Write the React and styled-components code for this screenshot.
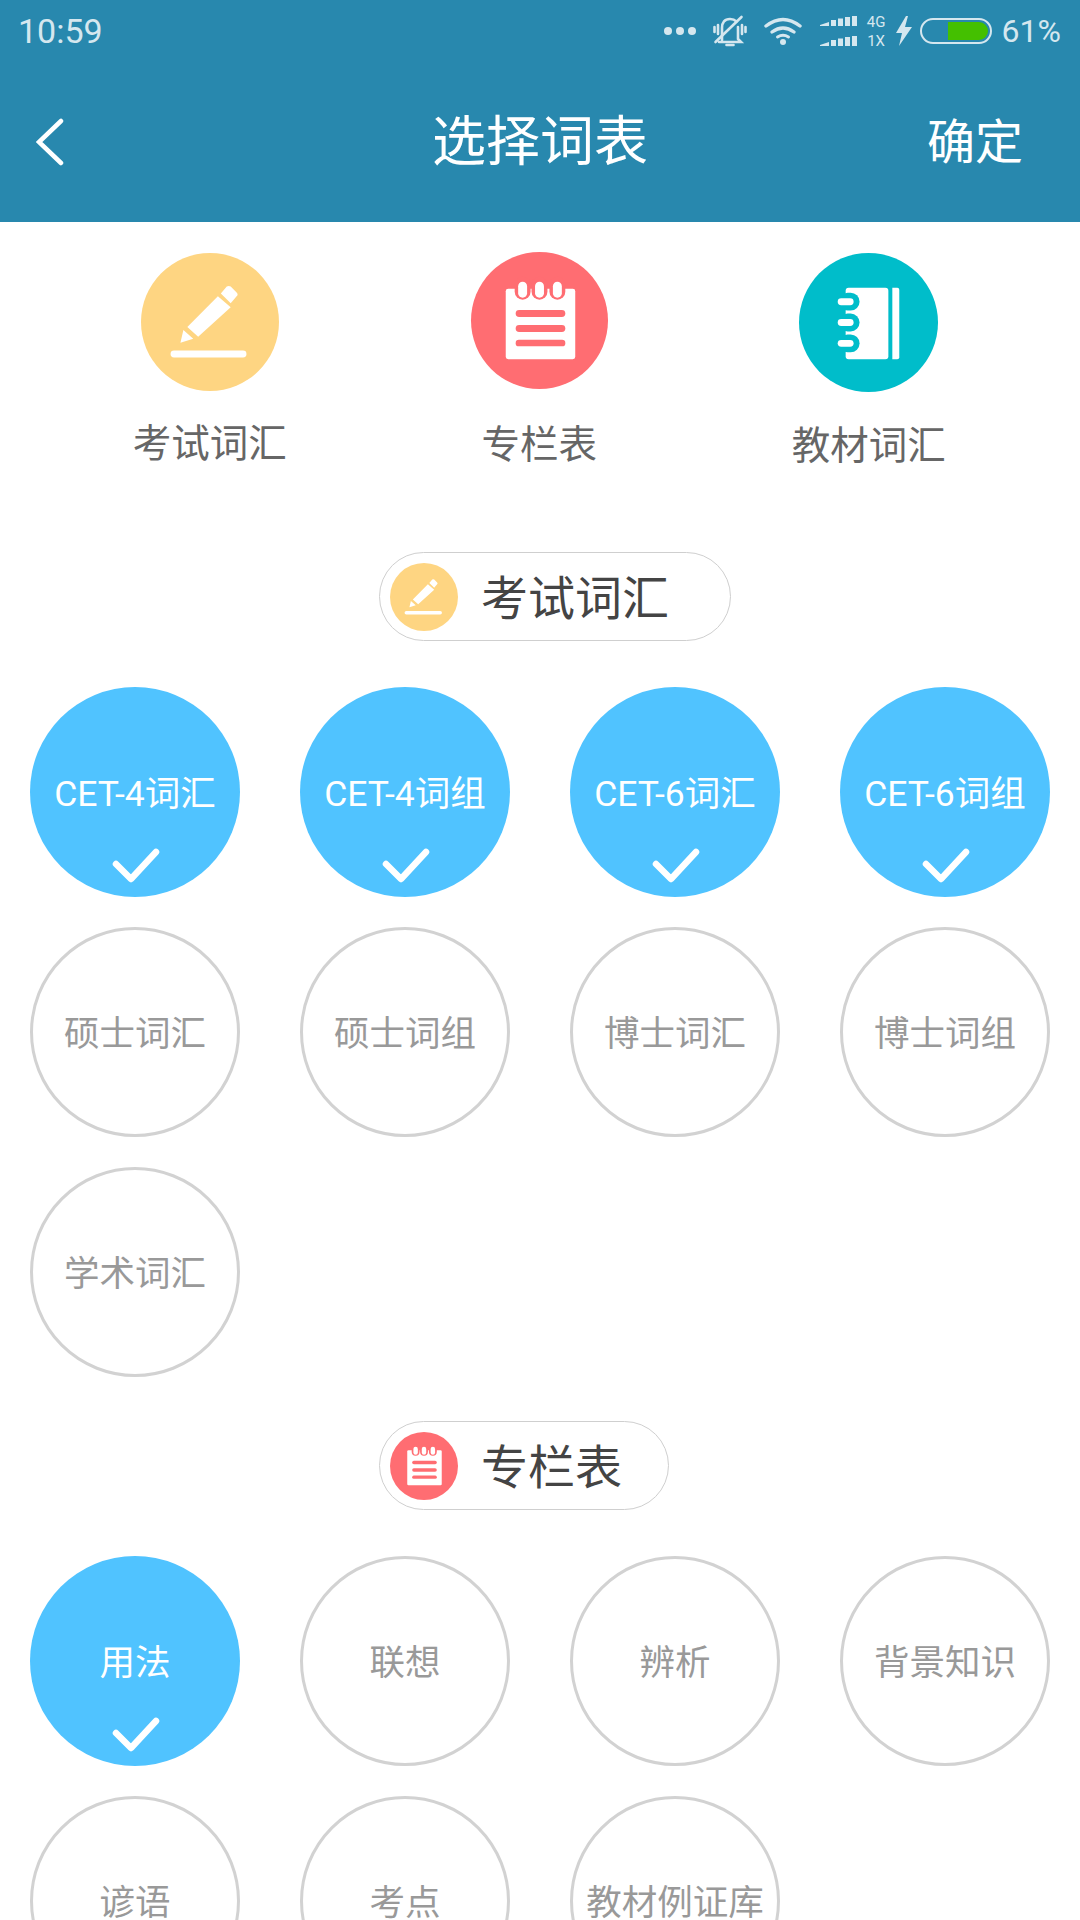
import React from "react";
import styled, { createGlobalStyle } from "styled-components";

const Global = createGlobalStyle`
  html, body { margin: 0; padding: 0; background: #fff; }
  body { font-family: Roboto, "Noto Sans CJK SC", sans-serif; }
  * { box-sizing: border-box; }
`;

const Page = styled.div`
  width: 1080px;
  height: 1920px;
  overflow: hidden;
  background: #fff;
`;
const Header = styled.header`
  height: 222px;
  background: #2888ae;
  display: flex;
  flex-direction: column;
`;
const StatusBar = styled.div`
  height: 62px;
  padding: 0 19px 0 18px;
  display: flex;
  align-items: center;
  justify-content: space-between;
  color: #d5e7ef;
`;
const Clock = styled.span`
  font-size: 34px;
  font-family: Roboto, sans-serif;
  font-weight: 400;
`;
const StatusIcons = styled.div`
  display: flex;
  align-items: center;
`;
const StatusGlyph = styled.svg`
  display: block;
  flex: none;
  margin-right: ${(p) => p.$gap}px;
`;
const NetLabels = styled.div`
  width: 21px;
  margin-right: 9px;
  display: flex;
  flex-direction: column;
  align-items: center;
  gap: 3px;
  font-size: 15px;
  line-height: 16px;
  font-family: Roboto, sans-serif;
`;
const Battery = styled.div`
  width: 72px;
  height: 26px;
  margin-right: 10px;
  border: 2px solid #d5e7ef;
  border-radius: 13px;
  padding: 2px;
  display: flex;
  justify-content: flex-end;
`;
const BatteryFill = styled.div`
  width: 40px;
  background: #44c000;
  border-radius: 0 9px 9px 0;
`;
const Percent = styled.span`
  font-size: 32px;
  font-weight: 400;
  font-family: Roboto, sans-serif;
`;
const NavBar = styled.div`
  flex: 1;
  display: grid;
  grid-template-columns: 1fr auto 1fr;
  align-items: center;
  color: #fff;
`;
const BackButton = styled.div`
  padding-left: 36px;
  display: flex;
`;
const Title = styled.h1`
  margin: 2px 0 0;
  font-size: 54px;
  font-weight: 400;
  line-height: 1;
`;
const Confirm = styled.div`
  justify-self: end;
  margin-top: 2px;
  padding-right: 57px;
  font-size: 48px;
  line-height: 1;
`;
const Tabs = styled.nav`
  height: 330px;
  padding: 30px 0 0 45px;
  display: grid;
  grid-template-columns: repeat(3, 329.5px);
  align-items: start;
`;
const Tab = styled.div`
  margin-top: ${(p) => p.$top}px;
  display: flex;
  flex-direction: column;
  align-items: center;
  gap: ${(p) => p.$gap}px;
`;
const TabLabel = styled.span`
  font-size: 38.5px;
  line-height: 50px;
  color: #666;
`;
const Disc = styled.div`
  width: ${(p) => p.$size}px;
  height: ${(p) => p.$size}px;
  border-radius: 50%;
  background: ${(p) => p.$color};
  flex: none;
  svg { display: block; width: 100%; height: 100%; }
`;
const SectionHead = styled.div`
  height: 89px;
  width: ${(p) => p.$width}px;
  margin-left: 379px;
  padding-left: 10px;
  border: 1.5px solid #cfcfcf;
  border-radius: 45px;
  display: flex;
  align-items: center;
  gap: 23px;
  color: #444;
`;
const HeadText = styled.span`
  margin-top: 4px;
  font-size: 47px;
  line-height: 1;
`;
const Grid = styled.div`
  margin-top: 46px;
  padding-left: 30px;
  display: grid;
  grid-template-columns: repeat(4, 210px);
  column-gap: 60px;
  row-gap: 30px;
  margin-bottom: 44px;
`;
const Chip = styled.div`
  position: relative;
  width: 210px;
  height: 210px;
  padding-bottom: 3px;
  border-radius: 50%;
  border: ${(p) => (p.$on ? "none" : "3px solid #d2d2d2")};
  background: ${(p) => (p.$on ? "#50c3ff" : "#fff")};
  color: ${(p) => (p.$on ? "#fff" : "#999")};
  display: flex;
  align-items: center;
  justify-content: center;
  font-size: 35.5px;
  white-space: nowrap;
`;
const Tick = styled.svg`
  position: absolute;
  left: 81px;
  top: 160px;
`;

const Pen = () => (
  <svg viewBox="0 0 140 140">
    <path fill="#fff" d="M40 91l3-13 10 9zM47 75l31-31 13 11-33 30zM81 41l6-7q2-1 4 0l6 6q2 2 0 4l-6 7z" />
    <rect x="30" y="99" width="77" height="7" rx="3.5" fill="#fff" />
  </svg>
);
const Note = () => (
  <svg viewBox="0 0 138 138">
    <rect x="35" y="37" width="70" height="71" rx="2.5" fill="#fff" />
    {[52, 69, 87].map((x) => (
      <g key={x}>
        <rect x={x - 8} y="25" width="16" height="23" rx="8" fill="#ff6d72" />
        <rect x={x - 4.5} y="30" width="9" height="16" rx="4.5" fill="#fff" />
      </g>
    ))}
    <rect x="45" y="58.5" width="50" height="7" rx="3.5" fill="#ff6d72" />
    <rect x="45" y="73.5" width="50" height="7" rx="3.5" fill="#ff6d72" />
    <rect x="45" y="88.5" width="50" height="6.5" rx="3.2" fill="#ff6d72" />
  </svg>
);
const Book = () => (
  <svg viewBox="0 0 140 140">
    <rect x="47" y="35" width="43" height="72" rx="3" fill="#fff" />
    <path fill="#fff" d="M94 35h5q2 0 2 2v68q0 2-2 2h-5z" />
    {[49, 70, 91].map((y) => (
      <g key={y}>
        <rect x="40" y={y - 9} width="21" height="18" rx="9" fill="#00bdca" />
        <rect x="39" y={y - 3.5} width="16" height="7" rx="3.5" fill="#fff" />
      </g>
    ))}
  </svg>
);

const Signal = ({ y }) => (
  <g fill="#d5e7ef" transform={`translate(0 ${y})`}>
    <path d="M0 9l9-3v4H0z" />
    <rect x="11" y="4" width="5" height="6" />
    <rect x="18" y="2.5" width="5" height="7.5" />
    <rect x="25" y="1" width="5" height="9" />
    <rect x="32" y="0" width="5" height="10" />
  </g>
);

const StatusRight = () => (
  <StatusIcons>
    <StatusGlyph $gap={17} width="32" height="10" viewBox="0 0 32 10">
      <g fill="#d5e7ef">
        <circle cx="4" cy="5" r="4" />
        <circle cx="16" cy="5" r="4" />
        <circle cx="28" cy="5" r="4" />
      </g>
    </StatusGlyph>
    <StatusGlyph $gap={17} width="34" height="32" viewBox="0 0 34 32">
      <g fill="none" stroke="#d5e7ef" strokeWidth="2.6" strokeLinecap="round">
        <path d="M9 25V13q0-9 8-9 4 0 6.5 2.5M25 12v12l3 3H6" />
        <path d="M13.5 30h7" />
        <path d="M2.5 27L28.5 2" />
        <path d="M5 10v9M1.5 12v5M29 10v9M32.500 12v5" />
      </g>
    </StatusGlyph>
    <StatusGlyph $gap={18} width="38" height="28" viewBox="0 0 38 28">
      <g fill="none" stroke="#d5e7ef" strokeWidth="3.4" strokeLinecap="round">
        <path d="M2 9q17-13 34 0" />
        <path d="M8 15q11-8 22 0" />
      </g>
      <path d="M13.5 20q5.5-3.5 11 0" fill="none" stroke="#d5e7ef" strokeWidth="3" strokeLinecap="round" />
      <circle cx="19" cy="25" r="3" fill="#d5e7ef" />
    </StatusGlyph>
    <StatusGlyph $gap={9} width="37" height="31" viewBox="0 0 37 31">
      <Signal y={0} />
      <Signal y={20} />
    </StatusGlyph>
    <NetLabels>
      <span>4G</span>
      <span>1X</span>
    </NetLabels>
    <StatusGlyph $gap={8} width="16" height="30" viewBox="0 0 16 30">
      <path fill="#d5e7ef" d="M10 0L0 17h6L3 30l13-19H9l3-11z" />
    </StatusGlyph>
    <Battery>
      <BatteryFill />
    </Battery>
    <Percent>61%</Percent>
  </StatusIcons>
);

const Check = () => (
  <Tick width="49" height="37" viewBox="0 0 49 37">
    <path d="M5 17l15 15L45 5" fill="none" stroke="#fff" strokeWidth="6.5" strokeLinecap="round" strokeLinejoin="round" />
  </Tick>
);

const exam = [
  ["CET-4词汇", true],
  ["CET-4词组", true],
  ["CET-6词汇", true],
  ["CET-6词组", true],
  ["硕士词汇"],
  ["硕士词组"],
  ["博士词汇"],
  ["博士词组"],
  ["学术词汇"],
];
const column = [
  ["用法", true],
  ["联想"],
  ["辨析"],
  ["背景知识"],
  ["谚语"],
  ["考点"],
  ["教材例证库"],
];

const Chips = ({ items }) => (
  <Grid>
    {items.map(([label, on]) => (
      <Chip key={label} $on={on}>
        {label}
        {on && <Check />}
      </Chip>
    ))}
  </Grid>
);

export default function App() {
  return (
    <Page>
      <Global />
      <Header>
        <StatusBar>
          <Clock>10:59</Clock>
          <StatusRight />
        </StatusBar>
        <NavBar>
          <BackButton>
            <svg width="28" height="48" viewBox="0 0 28 48">
              <path d="M25 3L3 24l22 21" fill="none" stroke="#fff" strokeWidth="4.5" strokeLinecap="round" />
            </svg>
          </BackButton>
          <Title>选择词表</Title>
          <Confirm>确定</Confirm>
        </NavBar>
      </Header>
      <Tabs>
        <Tab $top={1} $gap={28}>
          <Disc $size={138} $color="#fed582"><Pen /></Disc>
          <TabLabel>考试词汇</TabLabel>
        </Tab>
        <Tab $top={0} $gap={31}>
          <Disc $size={137} $color="#ff6d72"><Note /></Disc>
          <TabLabel>专栏表</TabLabel>
        </Tab>
        <Tab $top={1} $gap={29}>
          <Disc $size={139} $color="#00bdca"><Book /></Disc>
          <TabLabel>教材词汇</TabLabel>
        </Tab>
      </Tabs>
      <SectionHead $width={352}>
        <Disc $size={68} $color="#fed582"><Pen /></Disc>
        <HeadText>考试词汇</HeadText>
      </SectionHead>
      <Chips items={exam} />
      <SectionHead $width={290}>
        <Disc $size={68} $color="#ff6d72"><Note /></Disc>
        <HeadText>专栏表</HeadText>
      </SectionHead>
      <Chips items={column} />
    </Page>
  );
}
